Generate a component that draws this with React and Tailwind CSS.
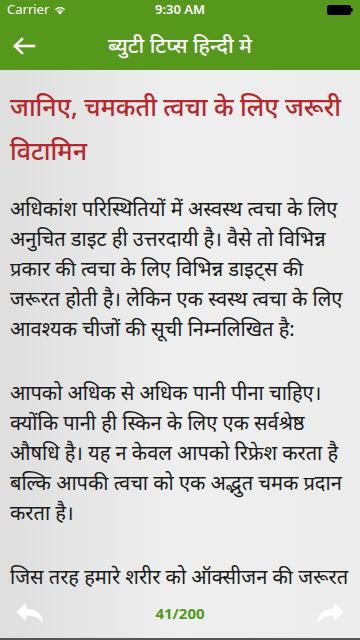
import React from "react";

const PARAS = [
  [
    "अधिकांश परिस्थितियों में अस्वस्थ त्वचा के लिए",
    "अनुचित डाइट ही उत्तरदायी है। वैसे तो विभिन्न",
    "प्रकार की त्वचा के लिए विभिन्न डाइट्स की",
    "जरूरत होती है। लेकिन एक स्वस्थ त्वचा के लिए",
    "आवश्यक चीजों की सूची निम्नलिखित है:",
  ],
  [
    "आपको अधिक से अधिक पानी पीना चाहिए।",
    "क्योंकि पानी ही स्किन के लिए एक सर्वश्रेष्ठ",
    "औषधि है। यह न केवल आपको रिफ्रेश करता है",
    "बल्कि आपकी त्वचा को एक अद्भुत चमक प्रदान",
    "करता है।",
  ],
  ["जिस तरह हमारे शरीर को ऑक्सीजन की जरूरत"],
];

const font = { fontFamily: '"Noto Sans", "Liberation Sans", sans-serif' };

function StatusBar() {
  return (
    <div className="h-5 flex items-center justify-between px-[7px] text-white text-[13px]" style={font}>
      <div className="flex items-center gap-1 w-24">
        <span>Carrier</span>
        <svg width="14" height="10" viewBox="0 0 14 10" fill="white">
          <path d="M7 9.5 L4.6 7 A3.4 3.4 0 0 1 9.4 7 Z" />
          <path d="M3.3 5.7 A5.2 5.2 0 0 1 10.7 5.7 L9.9 6.5 A4.1 4.1 0 0 0 4.1 6.5 Z" />
          <path d="M1.8 4.2 A7.3 7.3 0 0 1 12.2 4.2 L11.4 5 A6.2 6.2 0 0 0 2.6 5 Z" />
        </svg>
      </div>
      <span className="font-semibold">9:30 AM</span>
      <div className="w-24 flex justify-end">
        <div className="flex items-center">
          <div className="w-[24px] h-[10px] bg-black rounded-[2px] border border-black" />
          <div className="w-[2px] h-[4px] bg-black rounded-r-sm" />
        </div>
      </div>
    </div>
  );
}

function NavBar() {
  return (
    <div className="h-[50px] flex items-center relative">
      <button className="absolute left-[12px] top-[16px]">
        <svg width="24" height="20" viewBox="0 0 24 20" fill="none" stroke="white" strokeWidth="2.6" strokeLinecap="square">
          <path d="M3 10 H22" />
          <path d="M10 3 L3 10 L10 17" />
        </svg>
      </button>
      <h1 className="flex-1 text-center text-white text-[21px] font-medium pt-[2px]" style={font}>
        ब्युटी टिप्स हिन्दी मे
      </h1>
    </div>
  );
}

function BottomBar() {
  return (
    <div className="h-[48px] flex items-center justify-between px-[15px] pb-[2px]">
      <svg width="28" height="22" viewBox="0 0 28 22" fill="white">
        <path d="M11 1 L1 10 L11 19 V13.5 C19 13.5 24 15.5 28 21 C27 12 21 7 11 6.5 Z" />
      </svg>
      <span className="text-[#4e9a1a] font-bold text-[15px]" style={font}>41/200</span>
      <svg width="28" height="22" viewBox="0 0 28 22" fill="white">
        <path d="M17 1 L27 10 L17 19 V13.5 C9 13.5 4 15.5 0 21 C1 12 7 7 17 6.5 Z" />
      </svg>
    </div>
  );
}

export default function App() {
  return (
    <div className="w-[360px] h-[640px] overflow-hidden flex flex-col bg-[#ededed]">
      <div className="bg-[#55981b] shrink-0">
        <StatusBar />
        <NavBar />
      </div>
      <div className="flex-1 overflow-hidden bg-gradient-to-r from-[#dedede] via-[#efefef] to-[#ececec] flex flex-col">
        <div className="flex-1 overflow-hidden px-[10px] pt-[14px]">
          <h2 className="text-[#b3282a] text-[25px] leading-[44px] font-medium mb-[22px]" style={font}>
            जानिए, चमकती त्वचा के लिए जरूरी विटामिन
          </h2>
          {PARAS.map((lines, i) => (
            <div key={i} className="text-[#1a1a1a] text-[20px] leading-[30px] mb-[34px]" style={font}>
              {lines.map((l, j) => (
                <div key={j} className="whitespace-nowrap">{l}</div>
              ))}
            </div>
          ))}
        </div>
        <BottomBar />
        <div className="h-[2px] bg-[#555]" />
      </div>
    </div>
  );
}
